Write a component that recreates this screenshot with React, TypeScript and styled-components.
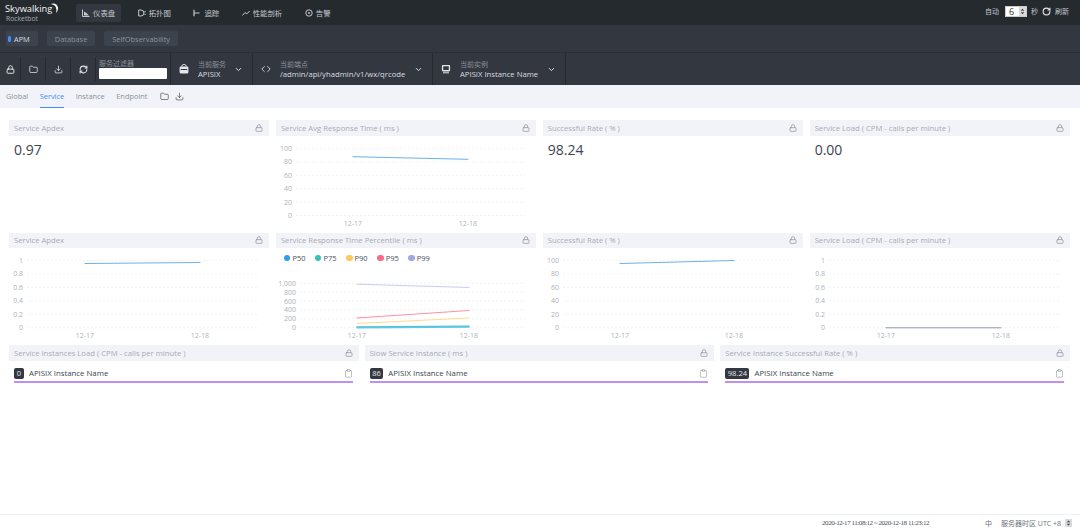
import React from 'react';
import styled, {createGlobalStyle} from 'styled-components';
import {Lock, Folder, Download, RefreshCw, ChevronDown, Code, Clipboard, RotateCw} from 'lucide-react';

const SANS = `"Open Sans", "Noto Sans CJK SC", sans-serif`;

const GlobalStyle = createGlobalStyle`
  html, body { margin: 0; padding: 0; background: #fff; }
  #root { font-family: ${SANS}; }
  * { box-sizing: border-box; }
`;

type Line = {from: number; to: number; color: string; width?: number};
type ChartProps = {
  ticks: string[];
  left: number;
  right?: number;
  top: number;
  bottom: number;
  height: number;
  xs: [number, number];
  lines: Line[];
};

function Chart({ticks, left, right = 249, top, bottom, height, xs, lines}: ChartProps): JSX.Element {
  const step = (bottom - top) / (ticks.length - 1);
  return (
    <svg width="100%" height={height} viewBox={`0 0 260 ${height}`} preserveAspectRatio="xMinYMin" style={{display: 'block'}}>
      {ticks.map((t, i) => (
        <g key={t}>
          <line x1={left} x2={right} y1={top + step * i} y2={top + step * i} stroke="#f0f1f4" strokeDasharray="2 2" strokeWidth="1" />
          <text x={left - 4} y={top + step * i + 2.5} textAnchor="end" fontSize="7" fill="#aeb2b9">{t}</text>
        </g>
      ))}
      {xs.map((x, i) => (
        <text key={i} x={x} y={bottom + 10} textAnchor="middle" fontSize="7" fill="#aeb2b9">{i === 0 ? '12-17' : '12-18'}</text>
      ))}
      {lines.map((l, i) => (
        <line key={i} x1={xs[0]} x2={xs[1]} y1={l.from} y2={l.to} stroke={l.color} strokeWidth={l.width ?? 1} strokeLinecap="round" />
      ))}
    </svg>
  );
}

function CardHead({title}: {title: string}): JSX.Element {
  return (
    <Head>
      <span>{title}</span>
      <Lock size={8} strokeWidth={2.2} color="#8f959c" />
    </Head>
  );
}

function DashIcon(): JSX.Element {
  return (
    <svg width="8" height="8" viewBox="0 0 8 8">
      <path d="M.5.5v7h7" fill="none" stroke="currentColor" />
      <path d="M2 6.5V2.5L4.5 4 7 6.5z" fill="currentColor" />
    </svg>
  );
}
function TopoIcon(): JSX.Element {
  return (
    <svg width="8" height="8" viewBox="0 0 8 8">
      <path d="M.7 1h2.2a2.9 2.9 0 0 1 0 6H.7z" fill="none" stroke="currentColor" />
      <path d="M6.4 2h1.2v1.2H6.4zM6.4 4.8h1.2V6H6.4z" fill="currentColor" />
    </svg>
  );
}
function TraceIcon(): JSX.Element {
  return (
    <svg width="8" height="8" viewBox="0 0 8 8">
      <path d="M1 .8v6.4M1 4h5.5" fill="none" stroke="currentColor" strokeWidth="1.2" />
    </svg>
  );
}
function PerfIcon(): JSX.Element {
  return (
    <svg width="8" height="8" viewBox="0 0 8 8">
      <path d="M.4 6.5 3 3.5l1.8 1.4L7.6 2" fill="none" stroke="currentColor" />
    </svg>
  );
}
function AlarmIcon(): JSX.Element {
  return (
    <svg width="8" height="8" viewBox="0 0 8 8">
      <circle cx="4" cy="4" r="3.2" fill="none" stroke="currentColor" />
      <circle cx="4" cy="4" r="1" fill="currentColor" />
    </svg>
  );
}
function ServiceIcon(): JSX.Element {
  return (
    <svg width="10" height="10" viewBox="0 0 10 10">
      <path d="M3 2.6V1.8C3 1 3.5.6 4.2.6h1.6C6.5.6 7 1 7 1.8v.8" fill="none" stroke="currentColor" />
      <path d="M2 2.4h6c.9 0 1.4.6 1.4 1.4v4.1c0 .9-.6 1.5-1.4 1.5H2C1.200 9.400.6 8.800.6 7.900V3.800C.6 3 1.200 2.400 2 2.400zM1.800 5v1.100h6.400V5z" fill="currentColor" fillRule="evenodd" />
    </svg>
  );
}
function InstanceIcon(): JSX.Element {
  return (
    <svg width="10" height="10" viewBox="0 0 10 10">
      <path d="M2 1h6c.7 0 1.100.4 1.100 1.100v4.200c0 .7-.4 1.100-1.100 1.100H2c-.7 0-1.100-.4-1.100-1.100V2.100C.9 1.400 1.300 1 2 1zm.2 1.300v3.700h5.600V2.300z" fill="currentColor" fillRule="evenodd" />
      <path d="M2 8.300h6v1H2z" fill="currentColor" />
    </svg>
  );
}
function SpinArrows(): JSX.Element {
  return (
    <ArrowBox viewBox="0 0 7 10" preserveAspectRatio="none">
      <rect width="7" height="10" fill="#d9dadc" />
      <path d="M3.500 2 5.300 4.200H1.700zM3.500 8 1.700 5.800h3.600z" fill="#444" />
    </ArrowBox>
  );
}

const BLUE = '#6cb0ec';
const legend = [
  {name: 'P50', color: '#2d9df0'},
  {name: 'P75', color: '#37c1bb'},
  {name: 'P90', color: '#fdc75c'},
  {name: 'P95', color: '#fb6a85'},
  {name: 'P99', color: '#a2a7e8'},
];
const percent = ['100', '80', '60', '40', '20', '0'];
const apdex = ['1', '0.8', '0.6', '0.4', '0.2', '0'];
const millis = ['1,000', '800', '600', '400', '200', '0'];

const navItems = [
  {label: '仪表盘', icon: DashIcon, active: true},
  {label: '拓扑图', icon: TopoIcon},
  {label: '追踪', icon: TraceIcon},
  {label: '性能剖析', icon: PerfIcon},
  {label: '告警', icon: AlarmIcon},
];

const instanceRows = [
  {title: 'Service Instances Load ( CPM - calls per minute )', value: '0'},
  {title: 'Slow Service Instance ( ms )', value: '86'},
  {title: 'Service Instance Successful Rate ( % )', value: '98.24'},
];

export default function App(): JSX.Element {
  return (
    <Page>
      <GlobalStyle />
      <TopBar>
        <Logo>
          <LogoName>Skywalking</LogoName>
          <LogoArc width="9" height="11" viewBox="0 0 9 11">
            <path d="M.5 1C4-.6 7.500 1 8 4.500c.2 2-.5 4-2 5.500C6.800 7.500 6.500 5 5.200 3.300 4 1.800 2.400 1.200.5 1z" fill="#fff" />
          </LogoArc>
          <LogoSub>Rocketbot</LogoSub>
        </Logo>
        <Nav>
          {navItems.map(({label, icon: Icon, active}) => (
            <NavItem key={label} $active={active}>
              <Icon />
              {label}
            </NavItem>
          ))}
        </Nav>
        <Auto>
          <span>自动</span>
          <Spin $boxed>
            <span>6</span>
            <SpinArrows />
          </Spin>
          <span>秒</span>
          <RotateCw size={9} strokeWidth={3} color="#e4e7ea" />
          <span>刷新</span>
        </Auto>
      </TopBar>

      <GroupBar>
        <GroupTab $active><Dot />APM</GroupTab>
        <GroupTab>Database</GroupTab>
        <GroupTab>SelfObservability</GroupTab>
      </GroupBar>

      <ToolBar>
        <ToolIcon><Lock size={9} strokeWidth={2.5} /></ToolIcon>
        <ToolIcon><Folder size={9} strokeWidth={2} /></ToolIcon>
        <ToolIcon><Download size={9} strokeWidth={2} /></ToolIcon>
        <ToolIcon><RefreshCw size={9} strokeWidth={2.8} /></ToolIcon>
        <Filter>
          <ToolLabel>服务过滤器</ToolLabel>
          <FilterInput />
        </Filter>
        <Selector $width={82}>
          <ServiceIcon />
          <SelectorText>
            <ToolLabel>当前服务</ToolLabel>
            <ToolValue>APISIX</ToolValue>
          </SelectorText>
          <ChevronDown size={9} strokeWidth={2.5} />
        </Selector>
        <Selector $width={180}>
          <Code size={10} strokeWidth={2} />
          <SelectorText>
            <ToolLabel>当前端点</ToolLabel>
            <ToolValue>/admin/api/yhadmin/v1/wx/qrcode</ToolValue>
          </SelectorText>
          <ChevronDown size={9} strokeWidth={2.5} />
        </Selector>
        <Selector $width={133}>
          <InstanceIcon />
          <SelectorText>
            <ToolLabel>当前实例</ToolLabel>
            <ToolValue>APISIX Instance Name</ToolValue>
          </SelectorText>
          <ChevronDown size={9} strokeWidth={2.5} />
        </Selector>
      </ToolBar>

      <TabBar>
        <Tab>Global</Tab>
        <Tab $active>Service</Tab>
        <Tab>Instance</Tab>
        <Tab>Endpoint</Tab>
        <TabIcons>
          <Folder size={9} strokeWidth={2} />
          <Download size={9} strokeWidth={2} />
        </TabIcons>
      </TabBar>

      <Main>
        <FourCols>
          <Card>
            <CardHead title="Service Apdex" />
            <BigValue>0.97</BigValue>
          </Card>
          <Card>
            <CardHead title="Service Avg Response Time ( ms )" />
            <Chart ticks={percent} left={20} top={12.3} bottom={79.7} height={96} xs={[77, 192]}
              lines={[{from: 20.7, to: 23.3, color: BLUE}]} />
          </Card>
          <Card>
            <CardHead title="Successful Rate ( % )" />
            <BigValue>98.24</BigValue>
          </Card>
          <Card>
            <CardHead title="Service Load ( CPM - calls per minute )" />
            <BigValue>0.00</BigValue>
          </Card>
          <Card>
            <CardHead title="Service Apdex" />
            <Chart ticks={apdex} left={18} top={12.5} bottom={79.8} height={96} xs={[76, 191]}
              lines={[{from: 15.5, to: 14.5, color: BLUE}]} />
          </Card>
          <Card>
            <CardHead title="Service Response Time Percentile ( ms )" />
            <Legend>
              {legend.map((l) => (
                <LegendItem key={l.name} $color={l.color}>{l.name}</LegendItem>
              ))}
            </Legend>
            <Chart ticks={millis} left={24} top={11.2} bottom={55.8} height={72} xs={[81, 193]}
              lines={[
                {from: 12.2, to: 15.5, color: '#c9cbf3'},
                {from: 46, to: 38.5, color: '#fb92a5'},
                {from: 51.5, to: 46, color: '#fddc94'},
                {from: 55, to: 54.2, color: '#4dc6c4', width: 1.5},
                {from: 55.8, to: 55, color: '#62c4ee', width: 1.5},
              ]} />
          </Card>
          <Card>
            <CardHead title="Successful Rate ( % )" />
            <Chart ticks={percent} left={20} top={12.5} bottom={79.8} height={96} xs={[77, 191]}
              lines={[{from: 15.5, to: 12.5, color: BLUE}]} />
          </Card>
          <Card>
            <CardHead title="Service Load ( CPM - calls per minute )" />
            <Chart ticks={apdex} left={19} top={12.5} bottom={79.8} height={96} xs={[76, 191]}
              lines={[{from: 79.8, to: 79.8, color: '#8f99a3'}]} />
          </Card>
        </FourCols>
        <ThreeCols>
          {instanceRows.map((r) => (
            <Card key={r.title}>
              <CardHead title={r.title} />
              <InstanceRow>
                <Badge>{r.value}</Badge>
                <InstanceName>APISIX Instance Name</InstanceName>
                <Clipboard size={9} strokeWidth={1.5} color="#8b9097" />
              </InstanceRow>
              <Progress />
            </Card>
          ))}
        </ThreeCols>
      </Main>

      <Footer>
        <Dates>2020-12-17 11:08:12 ~ 2020-12-18 11:23:12</Dates>
        <Lang>中</Lang>
        <span>服务器时区 UTC +8</span>
        <Spin><SpinArrows /></Spin>
      </Footer>
    </Page>
  );
}

const Page = styled.div`
  display: flex;
  flex-direction: column;
  width: 1080px;
  height: 530px;
  overflow: hidden;
  background: #fff;
`;
const TopBar = styled.header`
  display: flex;
  align-items: center;
  flex: 0 0 25px;
  padding: 0 11px 3px 5px;
  background: #252a2f;
  color: #d8dce0;
`;
const Logo = styled.div`
  position: relative;
  width: 71px;
  height: 22px;
  padding-top: 3px;
  flex: none;
`;
const LogoName = styled.div`
  font-size: 9.3px;
  font-weight: 500;
  line-height: 11px;
  color: #f2f4f5;
`;
const LogoSub = styled.div`
  margin-top: 1px;
  padding-left: 1px;
  font-size: 6.8px;
  line-height: 7px;
  color: #a5abb2;
`;
const LogoArc = styled.svg`
  position: absolute;
  top: 3px;
  left: 45px;
`;
const Nav = styled.nav`
  display: flex;
  align-items: center;
  gap: 10.5px;
`;
const NavItem = styled.div<{$active?: boolean}>`
  display: flex;
  align-items: center;
  gap: 3px;
  height: 18px;
  margin-top: 3px;
  padding: 0 6px;
  border-radius: 2px;
  font-size: 7.4px;
  color: #c3c8cd;
  background: ${({$active}) => ($active ? '#333840' : 'transparent')};
`;
const Auto = styled.div`
  display: flex;
  align-items: center;
  gap: 4px;
  margin-left: auto;
  font-size: 7px;
  color: #c3c8cd;
`;
const Spin = styled.div<{$boxed?: boolean}>`
  display: flex;
  align-items: stretch;
  justify-content: space-between;
  flex: none;
  width: ${({$boxed}) => ($boxed ? '22px' : '7px')};
  height: ${({$boxed}) => ($boxed ? '11px' : '8px')};
  padding-left: ${({$boxed}) => ($boxed ? '3px' : '0')};
  margin: ${({$boxed}) => ($boxed ? '0 0 0 2px' : '0 0 0 -3px')};
  background: #fff;
  border: ${({$boxed}) => ($boxed ? '1px solid #ccc' : '0')};
  color: #333;
  font-size: 9px;
  line-height: 9px;
`;
const ArrowBox = styled.svg`
  display: block;
  width: 7px;
  height: 100%;
`;
const GroupBar = styled.div`
  display: flex;
  align-items: center;
  gap: 9px;
  flex: 0 0 27px;
  padding: 0 6px;
  background: #333840;
`;
const GroupTab = styled.div<{$active?: boolean}>`
  display: flex;
  align-items: center;
  gap: 3px;
  height: 15px;
  padding: 0 8px 0 ${({$active}) => ($active ? '2px' : '8px')};
  border-radius: 2px;
  font-size: 7.4px;
  background: #3d434c;
  color: ${({$active}) => ($active ? '#d8dce0' : '#8b9198')};
`;
const Dot = styled.i`
  display: block;
  width: 3px;
  height: 6px;
  border-radius: 2px;
  background: #448dfe;
`;
const ToolBar = styled.div`
  display: flex;
  align-items: stretch;
  flex: 0 0 33px;
  background: #333840;
  border-top: 1px solid #2a2e35;
  color: #e4e7ea;
`;
const ToolIcon = styled.div`
  display: flex;
  align-items: center;
  justify-content: center;
  width: 25px;
  margin: 4px 0;
  border-right: 1px solid #262a30;
  &:first-child { width: 21px; }
`;
const Filter = styled.div`
  display: flex;
  flex-direction: column;
  justify-content: center;
  width: 75px;
  padding: 2px 3px;
  border-right: 1px solid #262a30;
`;
const FilterInput = styled.div`
  width: 68px;
  height: 11px;
  background: #fff;
  border-radius: 1px;
`;
const ToolLabel = styled.div`
  font-size: 7px;
  line-height: 9px;
  color: #8b9198;
  white-space: nowrap;
`;
const ToolValue = styled.div`
  font-size: 7.7px;
  line-height: 10px;
  color: #d8dce0;
  white-space: nowrap;
`;
const Selector = styled.div<{$width: number}>`
  display: flex;
  align-items: center;
  width: ${({$width}) => $width}px;
  padding: 0 9px 0 8px;
  gap: 9px;
  border-right: 1px solid #262a30;
`;
const SelectorText = styled.div`
  flex: 1;
  min-width: 0;
`;
const TabBar = styled.div`
  display: flex;
  align-items: stretch;
  gap: 11.5px;
  flex: 0 0 23px;
  padding: 0 6px;
  background: #f1f3f8;
`;
const Tab = styled.div<{$active?: boolean}>`
  display: flex;
  align-items: center;
  font-size: 7.4px;
  color: ${({$active}) => ($active ? '#448dfe' : '#8b9198')};
  border-bottom: 1px solid ${({$active}) => ($active ? '#448dfe' : 'transparent')};
`;
const TabIcons = styled.div`
  display: flex;
  align-items: center;
  gap: 6px;
  padding-left: 1px;
  color: #555b63;
`;
const Main = styled.main`
  display: flex;
  flex-direction: column;
  padding: 12px 10px 0 9px;
`;
const FourCols = styled.div`
  display: grid;
  grid-template-columns: repeat(4, 1fr);
  grid-auto-rows: 112.5px;
  column-gap: 6.5px;
`;
const ThreeCols = styled.div`
  display: grid;
  grid-template-columns: repeat(3, 1fr);
  column-gap: 6px;
`;
const Card = styled.section`
  min-width: 0;
`;
const Head = styled.div`
  display: flex;
  align-items: center;
  justify-content: space-between;
  height: 15.5px;
  padding: 0 6px 0 5px;
  background: #f1f3f8;
  font-size: 7.7px;
  color: #a7acb4;
`;
const BigValue = styled.div`
  padding: 4px 5px 0;
  font-size: 14px;
  line-height: 20px;
  color: #3d444f;
`;
const Legend = styled.div`
  display: flex;
  gap: 9.5px;
  height: 24px;
  padding: 5px 8px 0;
`;
const LegendItem = styled.div<{$color: string}>`
  display: flex;
  align-items: center;
  gap: 2px;
  height: 10px;
  font-size: 7.5px;
  color: #4a5059;
  &::before {
    content: '';
    width: 6.5px;
    height: 6.5px;
    border-radius: 50%;
    background: ${({$color}) => $color};
  }
`;
const InstanceRow = styled.div`
  display: flex;
  align-items: center;
  gap: 5px;
  height: 14px;
  margin-top: 5.5px;
  padding: 0 6px 0 5px;
`;
const Badge = styled.span`
  padding: 0 2.5px;
  min-width: 10px;
  text-align: center;
  border-radius: 2px;
  background: #333840;
  color: #e4e7ea;
  font-size: 7.5px;
  line-height: 11px;
`;
const InstanceName = styled.span`
  flex: 1;
  font-size: 7.8px;
  color: #3d444f;
`;
const Progress = styled.div`
  height: 2px;
  margin: 1px 6px 0 5px;
  background: #c08ff0;
`;
const Footer = styled.footer`
  display: flex;
  align-items: center;
  justify-content: flex-end;
  gap: 7px;
  height: 16px;
  margin-top: auto;
  padding-right: 8px;
  border-top: 1px solid #f0f1f3;
  font-size: 7px;
  color: #6b7179;
`;
const Dates = styled.span`
  margin-right: 49px;
  font-family: "Liberation Serif", serif;
  font-size: 7px;
  letter-spacing: -0.45px;
  color: #4a5059;
`;
const Lang = styled.span`
  margin-right: 2px;
`;
